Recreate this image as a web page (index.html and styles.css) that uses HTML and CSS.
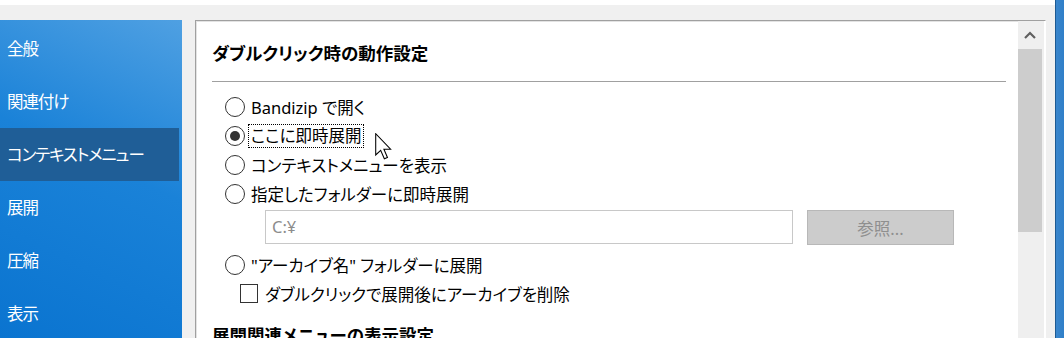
FILE: index.html
```html
<!DOCTYPE html>
<html lang="ja">
<head>
    <meta charset="UTF-8">
    <title>Bandizip 設定</title>
    <link rel="stylesheet" href="styles.css">
</head>
<body>
    <div class="window">
        <div class="top-strip"></div>
        <div class="main">
            <ul class="sidebar">
                <li>全般</li>
                <li>関連付け</li>
                <li class="active">コンテキストメニュー</li>
                <li>展開</li>
                <li>圧縮</li>
                <li>表示</li>
            </ul>

            <div class="panel">
                <div class="page">
                    <h3 class="section-title">ダブルクリック時の動作設定</h3>
                    <div class="separator"></div>

                    <div class="options">
                        <label class="radio-row"><span class="radio"></span>Bandizip で開く</label>
                        <label class="radio-row"><span class="radio checked"></span><span class="focus">ここに即時展開</span></label>
                        <label class="radio-row"><span class="radio"></span>コンテキストメニューを表示</label>
                        <label class="radio-row"><span class="radio"></span>指定したフォルダーに即時展開</label>

                        <div class="path-row">
                            <div class="path-input">C:¥</div>
                            <button class="browse-btn">参照...</button>
                        </div>

                        <label class="radio-row spaced"><span class="radio"></span>"アーカイブ名" フォルダーに展開</label>
                        <label class="check-row"><span class="checkbox"></span>ダブルクリックで展開後にアーカイブを削除</label>
                    </div>

                    <h3 class="section-title second">展開関連メニューの表示設定</h3>

                    <svg class="cursor" width="17" height="27" viewBox="0 0 12 19">
                        <path d="M0.5 0.5 L0.5 15.5 L4 12.2 L6.6 18.2 L8.8 17.3 L6.3 11.4 L11 11.4 Z" fill="#fff" stroke="#000" stroke-width="0.75" stroke-linejoin="miter"/>
                    </svg>
                </div>

                <div class="scrollbar">
                    <div class="scroll-up">
                        <svg width="12" height="8" viewBox="0 0 12 8">
                            <path d="M1 7 L6 2 L11 7" fill="none" stroke="#606060" stroke-width="2.2"/>
                        </svg>
                    </div>
                    <div class="scroll-thumb"></div>
                </div>
            </div>
        </div>
    </div>
    <div class="desk-edge"></div>
</body>
</html>
```

FILE: styles.css
```css
:root {
    --window-bg: #f0f0f0;
    --text-color: #000000;
    --muted-text: #8c8c8c;
    --side-light: #4fa0e2;
    --side-dark: #0a74d0;
    --active-bg: #1f5e97;
}

html, body {
    margin: 0;
    height: 100%;
}

body {
    display: flex;
    width: 1064px;
    height: 338px;
    overflow: hidden;
    background-color: var(--window-bg);
    font-family: "Noto Sans", "Noto Sans CJK JP", sans-serif;
    font-feature-settings: "palt";
    font-size: 16.5px;
    color: var(--text-color);
}

.window {
    width: 1055px;
    display: flex;
    flex-direction: column;
}

.top-strip {
    height: 5px;
    background-color: #ffffff;
}

.main {
    flex: 1;
    display: flex;
    gap: 13px;
    padding-top: 15px;
    min-height: 0;
}

/* Sidebar */
.sidebar {
    width: 182px;
    margin: 0;
    padding: 2px 0 0 0;
    list-style: none;
    background: linear-gradient(205deg, var(--side-light) 0%, #1a82d8 45%, var(--side-dark) 100%);
    color: #ffffff;
    font-size: 16.5px;
    letter-spacing: -1.1px;
}

.sidebar li {
    height: 53px;
    line-height: 53px;
    padding-left: 7px;
    width: 172px;
    white-space: nowrap;
}

.sidebar li.active {
    background-color: var(--active-bg);
}

/* Panel */
.panel {
    width: 849px;
    display: flex;
    background-color: #ffffff;
    border-top: 1px solid #a0a0a0;
    border-left: 1px solid #a0a0a0;
    border-right: 1px solid #ffffff;
    box-shadow: inset 1px 1px 0 #e3e3e3;
}

.page {
    position: relative;
    flex: 1;
    padding: 0 12px 0 16px;
}

.section-title {
    margin: 20px 0 0 0;
    font-size: 17.5px;
    line-height: 24px;
    font-weight: bold;
    white-space: nowrap;
}

.section-title.second {
    margin-top: 15px;
}

.separator {
    margin-top: 16px;
    border-top: 1px solid #a0a0a0;
}

.options {
    padding-top: 10px;
}

.radio-row,
.check-row {
    display: flex;
    align-items: center;
    height: 29px;
    padding-left: 13px;
    white-space: nowrap;
}

.radio-row.spaced {
    margin-top: 5px;
}

.radio {
    position: relative;
    box-sizing: border-box;
    width: 20px;
    height: 20px;
    margin-right: 6px;
    border: 1px solid #333333;
    border-radius: 50%;
    background-color: #ffffff;
    flex-shrink: 0;
}

.radio.checked::after {
    content: "";
    position: absolute;
    left: 4px;
    top: 4px;
    width: 10px;
    height: 10px;
    border-radius: 50%;
    background-color: #333333;
}

.focus {
    outline: 1px dotted #000000;
    outline-offset: 0;
    padding: 0 2px;
    margin-left: -2px;
    line-height: 22px;
}

.check-row {
    padding-left: 28px;
}

.checkbox {
    box-sizing: border-box;
    width: 18px;
    height: 19px;
    margin-right: 7px;
    border: 1px solid #333333;
    background-color: #ffffff;
    flex-shrink: 0;
}

.path-row {
    display: flex;
    align-items: flex-start;
    gap: 14px;
    margin-top: 2px;
    padding-left: 53px;
}

.path-input {
    box-sizing: border-box;
    width: 528px;
    height: 34px;
    line-height: 32px;
    padding-left: 6px;
    border: 1px solid #c8c8c8;
    color: var(--muted-text);
}

.browse-btn {
    box-sizing: border-box;
    width: 147px;
    height: 35px;
    border: 1px solid #b8b8b8;
    background-color: #cccccc;
    color: #8f8f8f;
    font-family: inherit;
    font-size: 16.5px;
    padding: 0;
}

.cursor {
    position: absolute;
    left: 179px;
    top: 112px;
}

/* Scrollbar */
.scrollbar {
    width: 27px;
    display: flex;
    flex-direction: column;
    background-color: #efefef;
    border-right: 1px solid #ffffff;
    box-sizing: border-box;
}

.scroll-up {
    height: 28px;
    width: 24px;
    display: flex;
    justify-content: center;
    align-items: center;
}

.scroll-thumb {
    width: 24px;
    height: 183px;
    background-color: #cdcdcd;
}

.desk-edge {
    width: 9px;
    background: linear-gradient(to right, #1d5a92 0 1px, #3a86cc 1px, #2f7fc8 100%);
}
```
